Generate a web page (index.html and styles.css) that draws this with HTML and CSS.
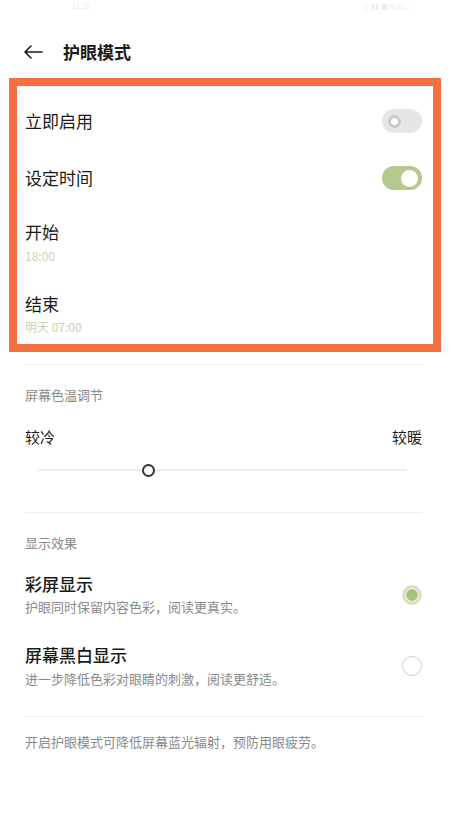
FILE: index.html
```html
<!DOCTYPE html>
<html lang="zh-CN">
<head>
<meta charset="utf-8">
<link rel="stylesheet" href="styles.css">
</head>
<body>
<div class="status">
  <span class="status-time">11:18</span>
  <span class="status-icons">⊙ ▮▮ ■ ıll ıll ▭</span>
</div>
<header class="header">
  <svg class="back" width="20" height="14" viewBox="0 0 20 14"><path d="M19 7H2M8 1L2 7l6 6" fill="none" stroke="#1a1a1a" stroke-width="1.6" stroke-linecap="round" stroke-linejoin="round"/></svg>
  <h1 class="title">护眼模式</h1>
</header>

<section class="box">
  <div class="row r1">
    <span class="label">立即启用</span>
    <span class="toggle off"><span class="knob"></span></span>
  </div>
  <div class="row r2">
    <span class="label">设定时间</span>
    <span class="toggle on"><span class="knob"></span></span>
  </div>
  <div class="item r3">
    <div class="label">开始</div>
    <div class="sub">18:00</div>
  </div>
  <div class="item r4">
    <div class="label">结束</div>
    <div class="sub">明天 07:00</div>
  </div>
</section>

<div class="divider d1"></div>

<div class="section-title s1">屏幕色温调节</div>
<div class="range-labels">
  <span>较冷</span>
  <span>较暖</span>
</div>
<div class="slider">
  <div class="track">
    <span class="thumb" style="left: 30%"></span>
  </div>
</div>

<div class="divider d2"></div>

<div class="section-title s2">显示效果</div>
<div class="option o1">
  <div class="option-text">
    <div class="option-title">彩屏显示</div>
    <div class="option-desc">护眼同时保留内容色彩，阅读更真实。</div>
  </div>
  <span class="radio checked"></span>
</div>
<div class="option o2">
  <div class="option-text">
    <div class="option-title">屏幕黑白显示</div>
    <div class="option-desc">进一步降低色彩对眼睛的刺激，阅读更舒适。</div>
  </div>
  <span class="radio"></span>
</div>

<div class="divider d3"></div>

<p class="footer">开启护眼模式可降低屏幕蓝光辐射，预防用眼疲劳。</p>
</body>
</html>
```

FILE: styles.css
```css
* { box-sizing: border-box; }

html, body {
  margin: 0;
  padding: 0;
  background: #ffffff;
}

body {
  width: 451px;
  font-family: "Noto Sans CJK SC", "Noto Sans", sans-serif;
  color: #1a1a1a;
  overflow: hidden;
}

.status {
  height: 30px;
  display: flex;
  justify-content: space-between;
  align-items: flex-start;
  padding: 0 40px 0 72px;
  font-size: 7px;
  line-height: 12px;
  color: #ececec;
}

.header {
  height: 44px;
  display: flex;
  align-items: center;
  padding-left: 23px;
}

.back {
  display: block;
  flex: none;
}

.title {
  margin: 0 0 0 20px;
  font-size: 17px;
  line-height: 22px;
  font-weight: 700;
}

.box {
  margin: 4px 10px 0 9px;
  border: 8px solid #f6703f;
  padding: 23px 11px 9px 8px;
}

.row {
  display: flex;
  align-items: center;
  justify-content: space-between;
}

.label {
  font-size: 17px;
  line-height: 22px;
}

.r2 { margin-top: 33px; }
.r3 { margin-top: 31px; }
.r4 { margin-top: 29px; }

.sub {
  margin-top: 5px;
  font-size: 12px;
  line-height: 16px;
  color: #cad6b1;
}

.r4 .sub { margin-top: 4px; }

.toggle {
  width: 40px;
  height: 24px;
  border-radius: 12px;
  display: flex;
  align-items: center;
  flex: none;
}

.toggle.off {
  background: #e6e6e6;
  padding-left: 6px;
}

.toggle.off .knob {
  width: 13px;
  height: 13px;
  border-radius: 50%;
  background: #ffffff;
  border: 3px solid #c9c9c9;
}

.toggle.on {
  background: #b4c98b;
  justify-content: flex-end;
  padding-right: 4px;
}

.toggle.on .knob {
  width: 17px;
  height: 17px;
  border-radius: 50%;
  background: #ffffff;
}

.divider {
  height: 1px;
  background: #eeeeee;
  margin: 0 29px 0 25px;
}

.d1 { margin-top: 12px; }
.d2 { margin-top: 32px; }
.d3 { margin-top: 28px; }

.section-title {
  padding-left: 25px;
  font-size: 13px;
  line-height: 18px;
  color: #8a8a8a;
}

.s1 { margin-top: 21px; }
.s2 { margin-top: 21px; }

.range-labels {
  display: flex;
  justify-content: space-between;
  margin: 23px 29px 0 25px;
  font-size: 15px;
  line-height: 20px;
}

.slider {
  margin: 13px 44px 0 38px;
  height: 20px;
  display: flex;
  align-items: center;
}

.track {
  position: relative;
  width: 100%;
  height: 2px;
  background: #eeeeee;
  border-radius: 1px;
}

.thumb {
  position: absolute;
  top: 50%;
  width: 13px;
  height: 13px;
  margin: -6.5px 0 0 -6.5px;
  border-radius: 50%;
  background: #ffffff;
  border: 2px solid #333333;
}

.option {
  display: flex;
  align-items: center;
  justify-content: space-between;
  margin: 0 29px 0 25px;
}

.o1 { margin-top: 21px; }
.o2 { margin-top: 28px; }

.option-title {
  font-size: 17px;
  line-height: 22px;
  font-weight: 500;
}

.option-desc {
  margin-top: 3px;
  font-size: 13px;
  line-height: 18px;
  color: #8a8a8a;
}

.o2 .option-desc { margin-top: 4px; }

.radio {
  flex: none;
  width: 20px;
  height: 20px;
  border-radius: 50%;
  border: 1.5px solid #cccccc;
  background: #ffffff;
}

.radio.checked {
  border: 3px solid #d6e2c2;
  background: #a9c37e;
  box-shadow: inset 0 0 0 1px #ffffff;
}

.footer {
  margin: 16px 29px 0 25px;
  font-size: 13px;
  line-height: 18px;
  color: #8a8a8a;
}
```
